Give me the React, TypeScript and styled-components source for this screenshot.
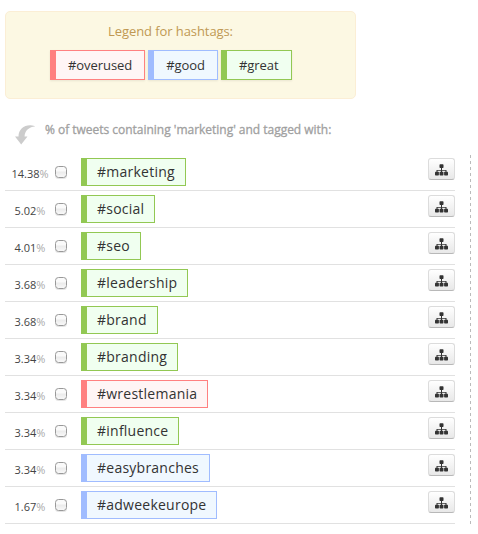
import React from 'react';
import styled, { createGlobalStyle } from 'styled-components';

type Tone = 'overused' | 'good' | 'great';

const tones: Record<Tone, { edge: string; fill: string }> = {
  overused: { edge: '#ff8080', fill: '#fff5f5' },
  good: { edge: '#a0bcff', fill: '#f0f8ff' },
  great: { edge: '#92c853', fill: '#f0fff0' },
};

const GlobalStyle = createGlobalStyle`
  * { box-sizing: border-box; }
  body { margin: 0; background: #fff; font-family: 'Open Sans', sans-serif; color: #333; }
`;

const Page = styled.main`
  width: 478px;
  height: 534px;
  padding: 11px 0 0 5px;
  overflow: hidden;
`;

const Legend = styled.section`
  width: 351px;
  height: 88px;
  border: 1px solid #fbeed5;
  border-radius: 5px;
  background: #fcf8e3;
`;

const LegendTitle = styled.h2`
  margin: 9px 0 0;
  padding-right: 20px;
  font-size: 13px;
  line-height: 20px;
  font-weight: 400;
  letter-spacing: -0.08px;
  color: #c09853;
  text-align: center;
`;

const LegendTags = styled.div`
  display: flex;
  gap: 3px;
  margin: 9px 0 0 44px;
`;

const Tag = styled.span<{ $tone: Tone; $small?: boolean }>`
  display: block;
  flex: none;
  height: ${(p) => (p.$small ? 30 : 28)}px;
  padding: 0 ${(p) => (p.$small ? 12 : 10)}px;
  border: 1px solid ${(p) => tones[p.$tone].edge};
  border-left-width: 6px;
  background: ${(p) => tones[p.$tone].fill};
  font-size: ${(p) => (p.$small ? 13 : 14)}px;
  line-height: ${(p) => (p.$small ? 28 : 26)}px;
  letter-spacing: ${(p) => (p.$small ? -0.06 : 0.24)}px;
  color: #333;
  white-space: nowrap;
  box-shadow: ${(p) => (p.$small ? '0 1px 2px rgba(0, 0, 0, 0.08)' : 'none')};
`;

const Caption = styled.header`
  display: flex;
  height: 55px;
  padding: 22px 0 0 10px;
`;

const CaptionText = styled.p`
  margin: 0 0 0 9px;
  font-size: 12px;
  line-height: 18px;
  font-weight: 400;
  letter-spacing: -0.02px;
  -webkit-text-stroke: 0.3px #a0a0a0;
  color: #a0a0a0;
  white-space: nowrap;
`;

const Arrow = styled.svg`
  flex: none;
  width: 21px;
  height: 21px;
  margin-top: 4px;
`;

const Results = styled.section`
  display: flex;
  width: 466px;
  justify-content: space-between;
`;

const List = styled.ul`
  width: 450px;
  margin: 0;
  padding: 0;
  list-style: none;
`;

const Divider = styled.div`
  width: 1px;
  margin-top: 1px;
  background: repeating-linear-gradient(to bottom, #bbb 0 3px, transparent 3px 6px);
`;

const Row = styled.li`
  display: flex;
  height: 37px;
  align-items: flex-start;
  padding-top: 4px;
  border-bottom: 1px solid #e1e1e1;
`;

const Percent = styled.span`
  width: 50px;
  padding-top: 8px;
  font-size: 11px;
  line-height: 16px;
  text-align: center;
  color: #444;
`;

const Unit = styled.span`
  color: #aaa;
`;

const Check = styled.input`
  appearance: none;
  width: 12px;
  height: 12px;
  margin: 8px 14px 0 0;
  border: 1px solid #999;
  border-radius: 3.5px;
  background: linear-gradient(#fafafa 0 40%, #ebebeb 50%, #f8f8f8);
  box-shadow: 0 1px 0 rgba(0, 0, 0, 0.1);
`;

const TreeButton = styled.button`
  display: flex;
  width: 27px;
  height: 22px;
  margin-left: auto;
  padding: 1px 0 0;
  align-items: center;
  justify-content: center;
  border: 1px solid #dcdcdc;
  border-bottom-color: #b8b8b8;
  border-radius: 3px;
  background: linear-gradient(#fff, #e8e8e8);
`;

const rows: { value: string; name: string; tone: Tone }[] = [
  { value: '14.38', name: '#marketing', tone: 'great' },
  { value: '5.02', name: '#social', tone: 'great' },
  { value: '4.01', name: '#seo', tone: 'great' },
  { value: '3.68', name: '#leadership', tone: 'great' },
  { value: '3.68', name: '#brand', tone: 'great' },
  { value: '3.34', name: '#branding', tone: 'great' },
  { value: '3.34', name: '#wrestlemania', tone: 'overused' },
  { value: '3.34', name: '#influence', tone: 'great' },
  { value: '3.34', name: '#easybranches', tone: 'good' },
  { value: '1.67', name: '#adweekeurope', tone: 'good' },
];

const TreeIcon = () => (
  <svg width="13" height="12" viewBox="0 0 13 12" fill="#333">
    <rect x="4.5" y="0.3" width="4" height="3.7" rx="0.7" />
    <path d="M6 4h1v2h4.5v2.5h-1V6.8H7v1.7H6V6.8H2.5v1.7h-1V6H6z" />
    <rect x="0" y="7.8" width="3.9" height="3.7" rx="0.7" />
    <rect x="4.55" y="7.8" width="3.9" height="3.7" rx="0.7" />
    <rect x="9.1" y="7.8" width="3.9" height="3.7" rx="0.7" />
  </svg>
);

export default function App() {
  return (
    <>
      <GlobalStyle />
      <Page>
        <Legend>
          <LegendTitle>Legend for hashtags:</LegendTitle>
          <LegendTags>
            <Tag $small $tone="overused">#overused</Tag>
            <Tag $small $tone="good">#good</Tag>
            <Tag $small $tone="great">#great</Tag>
          </LegendTags>
        </Legend>
        <Caption>
          <Arrow viewBox="0 0 21 21" fill="#ccc">
            <path d="M0 11.5h3.5C3.5 4.5 9 0 15.5 0.3C18 0.4 19.5 0.9 20 1.5C14.5 2 10 5 9.5 11.5H12.5L6.2 19.5Z" />
          </Arrow>
          <CaptionText>% of tweets containing 'marketing' and tagged with:</CaptionText>
        </Caption>
        <Results>
          <List>
            {rows.map((row) => (
              <Row key={row.name}>
                <Percent>
                  {row.value}
                  <Unit>%</Unit>
                </Percent>
                <Check type="checkbox" aria-label={row.name} />
                <Tag $tone={row.tone}>{row.name}</Tag>
                <TreeButton aria-label={`Related to ${row.name}`}>
                  <TreeIcon />
                </TreeButton>
              </Row>
            ))}
          </List>
          <Divider />
        </Results>
      </Page>
    </>
  );
}
